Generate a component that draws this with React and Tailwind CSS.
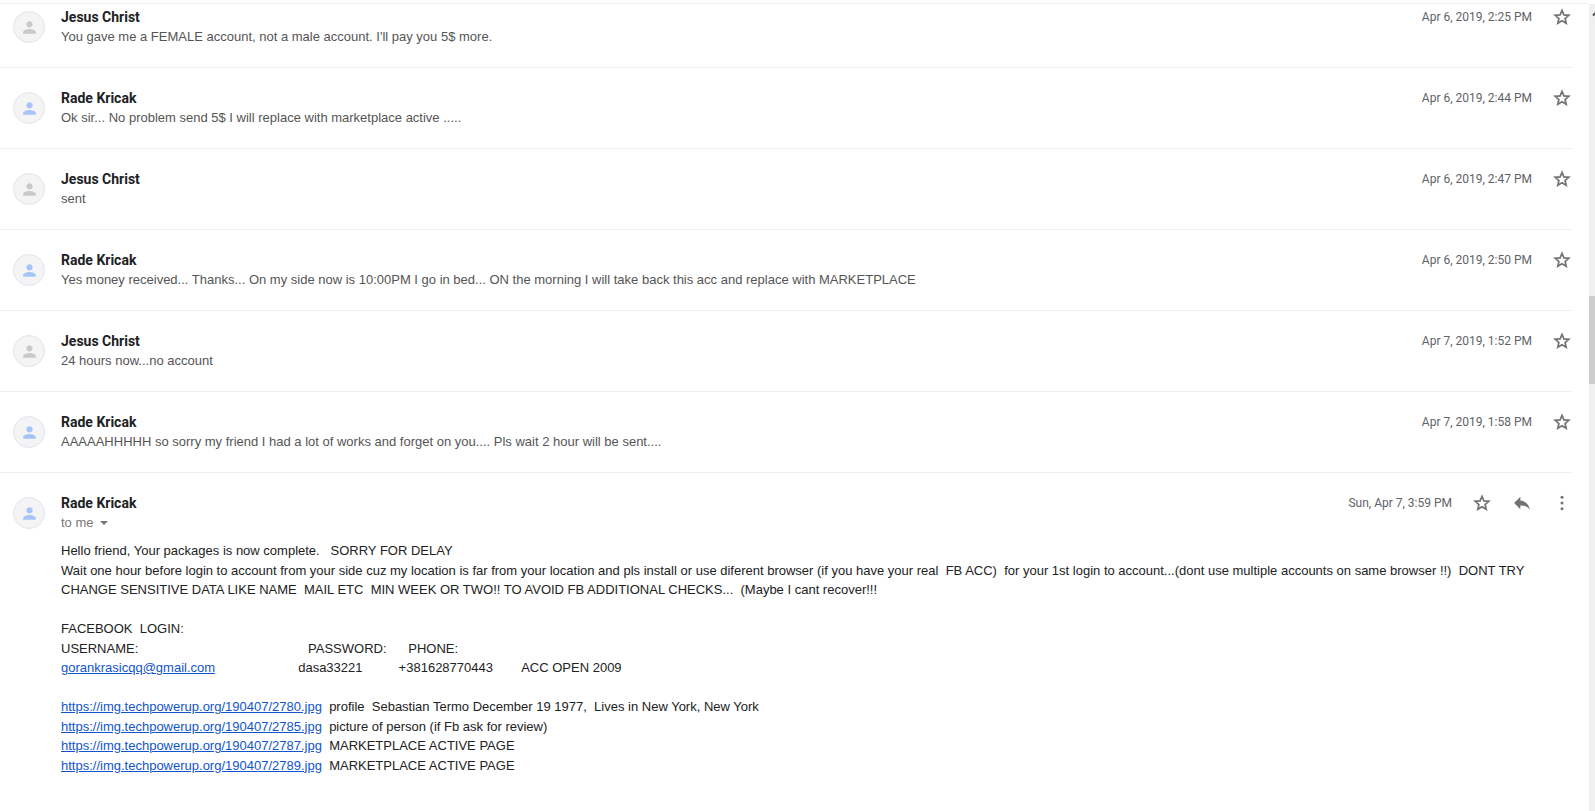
import { MdPerson } from "react-icons/md";

// Collapsed messages of the thread, oldest first
const messages = [
  { from: "Jesus Christ", date: "Apr 6, 2019, 2:25 PM", text: "You gave me a FEMALE account, not a male account. I'll pay you 5$ more." },
  { from: "Rade Kricak", known: true, date: "Apr 6, 2019, 2:44 PM", text: "Ok sir... No problem send 5$ I will replace with marketplace active ....." },
  { from: "Jesus Christ", date: "Apr 6, 2019, 2:47 PM", text: "sent" },
  {
    from: "Rade Kricak",
    known: true,
    date: "Apr 6, 2019, 2:50 PM",
    text: "Yes money received... Thanks... On my side now is 10:00PM I go in bed... ON the morning I will take back this acc and replace with MARKETPLACE",
  },
  { from: "Jesus Christ", date: "Apr 7, 2019, 1:52 PM", text: "24 hours now...no account" },
  {
    from: "Rade Kricak",
    known: true,
    date: "Apr 7, 2019, 1:58 PM",
    text: "AAAAAHHHHH so sorry my friend I had a lot of works and forget on you.... Pls wait 2 hour will be sent....",
  },
];

const pictures = [
  { id: "2780", note: "profile  Sebastian Termo December 19 1977,  Lives in New York, New York" },
  { id: "2785", note: "picture of person (if Fb ask for review)" },
  { id: "2787", note: "MARKETPLACE ACTIVE PAGE" },
  { id: "2789", note: "MARKETPLACE ACTIVE PAGE" },
];

function Avatar({ known }) {
  return (
    <div
      className={`mt-1 flex size-8 shrink-0 items-center justify-center rounded-full border bg-[#f4f4f4] ${
        known ? "border-[#dfe6f2] text-[#a6c4f7]" : "border-[#e4e4e4] text-[#c9c9c9]"
      }`}
    >
      <MdPerson className="size-[19px]" />
    </div>
  );
}

function StarButton() {
  return (
    <button type="button" aria-label="Star">
      <svg viewBox="0 0 20 20" className="size-5" fill="none" stroke="currentColor" strokeWidth="1.700">
        <path d="M10 3.400L11.900 7.900L16.800 8.300L13.100 11.500L14.200 16.300L10 13.750L5.800 16.300L6.900 11.500L3.200 8.300L8.100 7.900Z" />
      </svg>
    </button>
  );
}

function Sender({ name }) {
  return <h3 className="font-[Roboto,sans-serif] text-sm leading-5 font-bold text-[#202124]">{name}</h3>;
}

function Actions({ date, children }) {
  return (
    <div className="flex h-5 shrink-0 items-center gap-5 text-[#737373]">
      <time className="font-[Roboto,sans-serif] text-xs text-[#5f6368]">{date}</time>
      {children}
    </div>
  );
}

function Message({ message }) {
  return (
    <article className="flex gap-4 border-b border-[#eceff1] py-5 pl-[13px] first:pt-[3px]">
      <Avatar known={message.known} />
      <div className="min-w-0 grow">
        <Sender name={message.from} />
        <p className="truncate text-[13px] leading-5 text-[#555]">{message.text}</p>
      </div>
      <Actions date={message.date}>
        <StarButton />
      </Actions>
    </article>
  );
}

function MailLink({ href, children }) {
  return (
    <a href={href} className="text-[#1155cc] underline">
      {children}
    </a>
  );
}

function OpenMessage() {
  return (
    <article className="flex gap-4 py-5 pl-[13px]">
      <Avatar known />
      <div className="min-w-0 grow">
        <div className="flex justify-between">
          <div>
            <Sender name="Rade Kricak" />
            <button type="button" className="flex items-center gap-1.5 text-[13px] leading-5 text-[#777]">
              to me
              <svg viewBox="0 0 8 4" className="h-1 w-2" fill="currentColor">
                <path d="M0 0h8L4 4z" />
              </svg>
            </button>
          </div>
          <Actions date="Sun, Apr 7, 3:59 PM">
            <StarButton />
            <button type="button" aria-label="Reply">
              <svg viewBox="0 0 24 24" className="size-5" fill="currentColor">
                <path d="M10 9V4.500L2.500 12l7.500 7.500v-4.600c5 0 8.900 1.500 11.500 5.100-1-5-4.200-10-11.500-11z" />
              </svg>
            </button>
            <button type="button" aria-label="More">
              <svg viewBox="0 0 24 24" className="size-5" fill="currentColor">
                <circle cx="12" cy="5" r="1.800" />
                <circle cx="12" cy="12" r="1.800" />
                <circle cx="12" cy="19" r="1.800" />
              </svg>
            </button>
          </Actions>
        </div>

        <div className="mt-2 pr-8 text-[13px] leading-normal whitespace-pre-wrap text-[#222]">
          <p>{"Hello friend, Your packages is now complete.   SORRY FOR DELAY"}</p>
          <p>
            {
              "Wait one hour before login to account from your side cuz my location is far from your location and pls install or use diferent browser (if you have your real  FB ACC)  for your 1st login to account...(dont use multiple accounts on same browser !!)  DONT TRY CHANGE SENSITIVE DATA LIKE NAME  MAIL ETC  MIN WEEK OR TWO!! TO AVOID FB ADDITIONAL CHECKS...  (Maybe I cant recover!!!"
            }
          </p>
          <br />
          <p>{"FACEBOOK  LOGIN:"}</p>
          <p>{`USERNAME:${" ".repeat(47)}PASSWORD:${" ".repeat(6)}PHONE:`}</p>
          <p>
            <MailLink href="mailto:gorankrasicqq@gmail.com">gorankrasicqq@gmail.com</MailLink>
            {`${" ".repeat(23)}dasa33221${" ".repeat(10)}+381628770443${" ".repeat(8)}ACC OPEN 2009`}
          </p>
          <br />
          {pictures.map((picture) => (
            <p key={picture.id}>
              <MailLink href={`https://img.techpowerup.org/190407/${picture.id}.jpg`}>
                {`https://img.techpowerup.org/190407/${picture.id}.jpg`}
              </MailLink>
              {`  ${picture.note}`}
            </p>
          ))}
        </div>
      </div>
    </article>
  );
}

function Scrollbar() {
  return (
    <div className="mt-1 w-1.5 shrink-0 overflow-hidden bg-[#f0f0f0]">
      <svg viewBox="0 0 17 17" className="mt-0.5 size-[17px]" fill="none" stroke="#505050" strokeWidth="2">
        <path d="M4 9.500L8.500 5L13 9.500" />
      </svg>
      <div className="mt-[273px] h-[88px] bg-[#cdcdcd]" />
    </div>
  );
}

export default function App() {
  return (
    <div className="flex h-screen overflow-hidden bg-white font-['Liberation_Sans',Arial,sans-serif]">
      <main className="mt-[3px] min-w-0 grow border-t border-[#eceff1] pr-[17px]">
        {messages.map((message) => (
          <Message key={message.date} message={message} />
        ))}
        <OpenMessage />
      </main>
      <Scrollbar />
    </div>
  );
}
